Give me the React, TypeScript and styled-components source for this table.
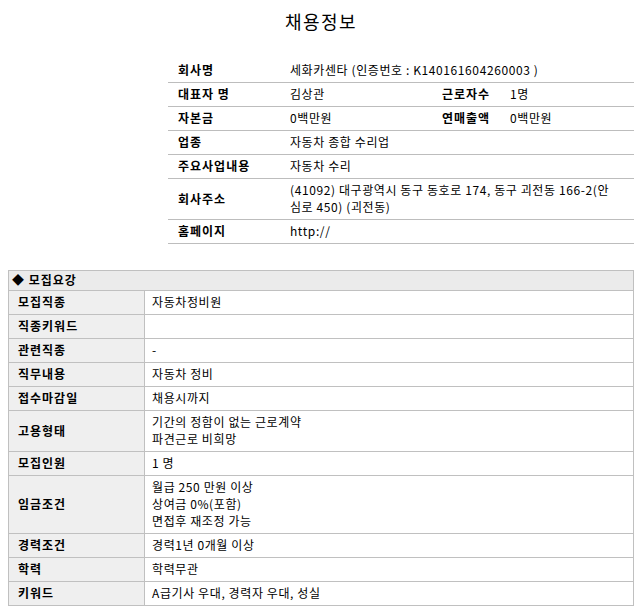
import React from "react";
import styled, { createGlobalStyle } from "styled-components";

const GlobalStyle = createGlobalStyle`
  body {
    margin: 8px;
    background: #ffffff;
    color: #000000;
    font-family: "Noto Sans CJK KR", "Noto Sans", sans-serif;
    font-size: 12px;
  }
`;

const Page = styled.div`
  width: 626px;
  display: flex;
  flex-direction: column;
`;

const Title = styled.h2`
  margin: 0 0 27px 0;
  padding-top: 2px;
  font-size: 18px;
  line-height: 22px;
  font-weight: normal;
  text-align: center;
  letter-spacing: 1.5px;
`;

const CompanyTable = styled.table`
  width: 466px;
  margin-left: auto;
  border-collapse: collapse;
  table-layout: fixed;
  margin-bottom: 26px;
`;

const CompanyRow = styled.tr`
  border-bottom: 1px solid #bdbdbd;
`;

const CompanyLabel = styled.th`
  padding: 2px 10px 4px;
  line-height: 17px;
  text-align: left;
  font-weight: bold;
  letter-spacing: 1px;
  vertical-align: middle;
  white-space: nowrap;
`;

const CompanyValue = styled.td`
  padding: 2px 22px 4px 10px;
  line-height: 17px;
  text-align: left;
  letter-spacing: 0.6px;
  vertical-align: middle;
`;

const RecruitTable = styled.table`
  width: 626px;
  border-collapse: collapse;
  table-layout: fixed;
  border: 1px solid #c0c0c0;
`;

const RecruitHeader = styled.th`
  background: #ebebeb;
  border: 1px solid #c0c0c0;
  padding: 0 3px 2px;
  line-height: 17px;
  text-align: left;
  font-weight: bold;
  letter-spacing: 1px;
`;

const RecruitRow = styled.tr``;

const RecruitLabel = styled.th`
  background: #efefef;
  border: 1px solid #c0c0c0;
  padding: 2px 9px 4px;
  line-height: 17px;
  text-align: left;
  font-weight: bold;
  letter-spacing: 1px;
  vertical-align: middle;
`;

const RecruitValue = styled.td`
  border: 1px solid #c0c0c0;
  padding: 2px 7px 4px;
  line-height: 17px;
  text-align: left;
  letter-spacing: 0.6px;
  vertical-align: middle;
  height: 17px;
`;

const Line = styled.div``;

const recruitRows: { label: string; lines: string[] }[] = [
  { label: "모집직종", lines: ["자동차정비원"] },
  { label: "직종키워드", lines: [""] },
  { label: "관련직종", lines: ["-"] },
  { label: "직무내용", lines: ["자동차 정비"] },
  { label: "접수마감일", lines: ["채용시까지"] },
  { label: "고용형태", lines: ["기간의 정함이 없는 근로계약", "파견근로 비희망"] },
  { label: "모집인원", lines: ["1 명"] },
  { label: "임금조건", lines: ["월급 250 만원 이상", "상여금 0%(포함)", "면접후 재조정 가능"] },
  { label: "경력조건", lines: ["경력1년 0개월 이상"] },
  { label: "학력", lines: ["학력무관"] },
  { label: "키워드", lines: ["A급기사 우대, 경력자 우대, 성실"] },
];

export default function App() {
  return (
    <>
      <GlobalStyle />
      <Page>
        <Title>채용정보</Title>
        <CompanyTable>
          <colgroup>
            <col style={{ width: 112 }} />
            <col style={{ width: 152 }} />
            <col style={{ width: 68 }} />
            <col style={{ width: 134 }} />
          </colgroup>
          <tbody>
            <CompanyRow>
              <CompanyLabel>회사명</CompanyLabel>
              <CompanyValue colSpan={3}>세화카센타 (인증번호 : K140161604260003 )</CompanyValue>
            </CompanyRow>
            <CompanyRow>
              <CompanyLabel>대표자 명</CompanyLabel>
              <CompanyValue>김상관</CompanyValue>
              <CompanyLabel>근로자수</CompanyLabel>
              <CompanyValue>1명</CompanyValue>
            </CompanyRow>
            <CompanyRow>
              <CompanyLabel>자본금</CompanyLabel>
              <CompanyValue>0백만원</CompanyValue>
              <CompanyLabel>연매출액</CompanyLabel>
              <CompanyValue>0백만원</CompanyValue>
            </CompanyRow>
            <CompanyRow>
              <CompanyLabel>업종</CompanyLabel>
              <CompanyValue colSpan={3}>자동차 종합 수리업</CompanyValue>
            </CompanyRow>
            <CompanyRow>
              <CompanyLabel>주요사업내용</CompanyLabel>
              <CompanyValue colSpan={3}>자동차 수리</CompanyValue>
            </CompanyRow>
            <CompanyRow>
              <CompanyLabel>회사주소</CompanyLabel>
              <CompanyValue colSpan={3}>
                (41092) 대구광역시 동구 동호로 174, 동구 괴전동 166-2(안심로 450) (괴전동)
              </CompanyValue>
            </CompanyRow>
            <CompanyRow>
              <CompanyLabel>홈페이지</CompanyLabel>
              <CompanyValue colSpan={3}>http://</CompanyValue>
            </CompanyRow>
          </tbody>
        </CompanyTable>
        <RecruitTable>
          <colgroup>
            <col style={{ width: 136 }} />
            <col />
          </colgroup>
          <tbody>
            <tr>
              <RecruitHeader colSpan={2}>◆ 모집요강</RecruitHeader>
            </tr>
            {recruitRows.map((row) => (
              <RecruitRow key={row.label}>
                <RecruitLabel>{row.label}</RecruitLabel>
                <RecruitValue>
                  {row.lines.map((l, i) => (
                    <Line key={i}>{l}</Line>
                  ))}
                </RecruitValue>
              </RecruitRow>
            ))}
          </tbody>
        </RecruitTable>
      </Page>
    </>
  );
}
